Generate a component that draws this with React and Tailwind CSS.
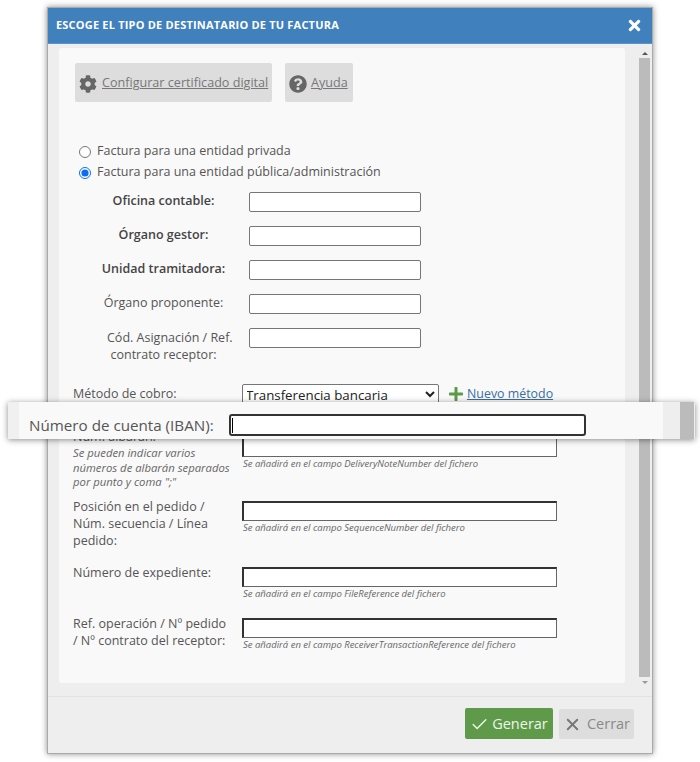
import { Check, X } from "lucide-react";
import { FaCog, FaQuestionCircle, FaPlus, FaTimes } from "react-icons/fa";

function EntityRow({ label, bold, tall }) {
  return (
    <div className={`flex items-start ${tall ? "h-[47px]" : "h-[34px]"}`}>
      <div className={`w-[131px] ml-[24px] mr-[1px] text-center text-[12.5px] whitespace-nowrap ${tall ? "leading-[17px] mt-[1px]" : "leading-[19px] -mt-[1px]"} ${bold ? "font-semibold text-[#444]" : ""}`}>
        {label}
      </div>
      <input className="ml-[19px] w-[172px] h-[20px] bg-white border border-[#767676] rounded-[2px]" />
    </div>
  );
}

function ExportRow({ label, note, hint, className }) {
  return (
    <div className={`flex items-start ${className}`}>
      <div className={`w-[169px] text-[12.5px] leading-[17px] shrink-0 ${note ? "-mt-[9px]" : "-mt-[3px]"}`}>
        <div>{label}</div>
        {note && <div className="mt-[1px] italic text-[11.3px] leading-[14.5px] text-[#666] whitespace-nowrap">{note}</div>}
      </div>
      <div>
        <input className="w-[315px] h-[20px] bg-white border border-[#666] border-t-2 border-l-2 border-t-[#333] border-l-[#333] block" />
        <div className="ml-[1px] italic text-[9.5px] leading-[13px] text-[#666]">{hint}</div>
      </div>
    </div>
  );
}

export default function App() {
  return (
    <div className="relative w-[700px] h-[762px] bg-white overflow-hidden text-[#555] font-['Open_Sans',sans-serif]">
      <div className="absolute left-[47px] top-[7px] w-[606px] h-[747px] flex flex-col bg-[#eee] border border-[#aaa] shadow-[0_0_6px_rgba(0,0,0,0.45)]">
        {/* Header */}
        <div className="h-[36px] shrink-0 bg-[#4080bd] flex items-center justify-between pl-[8px] pr-[9px] border-b border-[#5b93c8]">
          <span className="text-white text-[11px] font-bold tracking-[0.2px]">ESCOGE EL TIPO DE DESTINATARIO DE TU FACTURA</span>
          <FaTimes className="text-white text-[17px]" />
        </div>

        {/* Body */}
        <div className="flex flex-1 min-h-0 pt-[4px] pl-[11px]">
          <div className="w-[566px] h-[635px] bg-[#f9f9f9] rounded-[3px] pt-[15px] pl-[16px]">
            <div className="flex gap-[13px]">
              <button className="h-[39px] w-[197px] bg-[#ddd] rounded-[2px] flex items-center pl-[4px] pt-[2px] gap-[5px] text-[#777] whitespace-nowrap">
                <FaCog className="text-[18px] text-[#666] shrink-0" />
                <span className="underline text-[12.6px]">Configurar certificado digital</span>
              </button>
              <button className="h-[39px] w-[68px] bg-[#ddd] rounded-[2px] flex items-center pl-[4px] pt-[2px] gap-[4px] text-[#777]">
                <FaQuestionCircle className="text-[18px] text-[#666]" />
                <span className="underline text-[12.6px]">Ayuda</span>
              </button>
            </div>

            <div className="mt-[39px] ml-[4px] text-[12.5px]">
              <label className="flex items-center h-[21px]">
                <input type="radio" name="tipo" className="w-[12px] h-[12px] m-0 mr-[6px] accent-[#0a6cf5]" />
                <span>Factura para una entidad privada</span>
              </label>
              <label className="flex items-center h-[21px]">
                <input type="radio" name="tipo" defaultChecked className="w-[12px] h-[12px] m-0 mr-[6px] accent-[#0a6cf5]" />
                <span>Factura para una entidad pública/administración</span>
              </label>
            </div>

            <div className="mt-[9px] -ml-[1px]">
              <EntityRow label="Oficina contable:" bold />
              <EntityRow label="Órgano gestor:" bold />
              <EntityRow label="Unidad tramitadora:" bold />
              <EntityRow label="Órgano proponente:" />
              <EntityRow label={<><span className="pl-[9px]">Cód. Asignación / Ref.</span><br />contrato receptor:</>} tall />
            </div>

            <div className="flex items-center mt-[9px] -ml-[2px] h-[20px]">
              <span className="w-[169px] text-[12.5px]">Método de cobro:</span>
              <select className="w-[197px] h-[20px] bg-white border border-[#767676] rounded-[2px] text-[13.3px] text-[#222] -indent-[1px]">
                <option>Transferencia bancaria</option>
              </select>
              <FaPlus className="ml-[9px] text-[16px] text-[#5b9a47]" />
              <a className="ml-[3px] underline text-[12.4px] text-[#3a6ea5]">Nuevo método</a>
            </div>

            <div className="-ml-[2px] mt-[33px]">
              <ExportRow
                className="h-[64px]"
                label="Núm. albarán:"
                note={<>Se pueden indicar varios<br />números de albarán separados<br />por punto y coma ";"</>}
                hint="Se añadirá en el campo DeliveryNoteNumber del fichero"
              />
              <ExportRow
                className="h-[66px]"
                label={<>Posición en el pedido /<br />Núm. secuencia / Línea<br />pedido:</>}
                hint="Se añadirá en el campo SequenceNumber del fichero"
              />
              <ExportRow
                className="h-[51px]"
                label="Número de expediente:"
                hint="Se añadirá en el campo FileReference del fichero"
              />
              <ExportRow
                label={<>Ref. operación / Nº pedido<br />/ Nº contrato del receptor:</>}
                hint="Se añadirá en el campo ReceiverTransactionReference del fichero"
              />
            </div>
          </div>

          {/* Scrollbar */}
          <div className="ml-[14px] w-[11px] h-[639px] flex flex-col items-center">
            <div className="h-[10px] flex items-center">
              <div className="w-0 h-0 border-x-[3px] border-x-transparent border-b-[3px] border-b-[#555]" />
            </div>
            <div className="w-[11px] h-[619px] bg-[#bbb]" />
            <div className="h-[10px] flex items-center">
              <div className="w-0 h-0 border-x-[3px] border-x-transparent border-t-[3px] border-t-[#999]" />
            </div>
          </div>
        </div>

        {/* Footer */}
        <div className="h-[57px] shrink-0 border-t border-[#e3e3e3] flex items-center justify-end gap-[6px] pr-[18px] pb-[3px]">
          <button className="w-[88px] h-[31px] bg-[#5f9a4a] rounded-[2px] text-[#eef5ea] text-[14.5px] flex items-center justify-center gap-[3px] pt-[1px]">
            <Check size={19} strokeWidth={1.8} />
            Generar
          </button>
          <button className="w-[75px] h-[30px] bg-[#ddd] rounded-[2px] text-[#8a8a8a] text-[14.5px] flex items-center justify-center gap-[5px] pt-[1px]">
            <X size={19} strokeWidth={2.4} className="text-[#777]" />
            Cerrar
          </button>
        </div>
      </div>

      {/* Magnified IBAN strip */}
      <div className="absolute left-[8px] top-[402px] w-[687px] h-[37px] flex bg-[#f9f9f9] shadow-[0_1px_6px_rgba(0,0,0,0.45)]">
        <div className="w-[11px] bg-[#f0f0f0]" />
        <div className="flex items-center flex-1 pt-[9px]">
          <span className="ml-[10px] text-[15.2px] text-[#555] w-[200px]">Número de cuenta (IBAN):</span>
          <div className="w-[357px] h-[22px] bg-white border-2 border-[#333] rounded-[3px] flex items-center pl-[1px]">
            <div className="w-[1px] h-[15px] bg-black" />
          </div>
        </div>
        <div className="w-[17px] bg-[#eee]" />
        <div className="w-[14px] bg-[#bbb]" />
        <div className="w-[1px] bg-[#eee]" />
      </div>
    </div>
  );
}
